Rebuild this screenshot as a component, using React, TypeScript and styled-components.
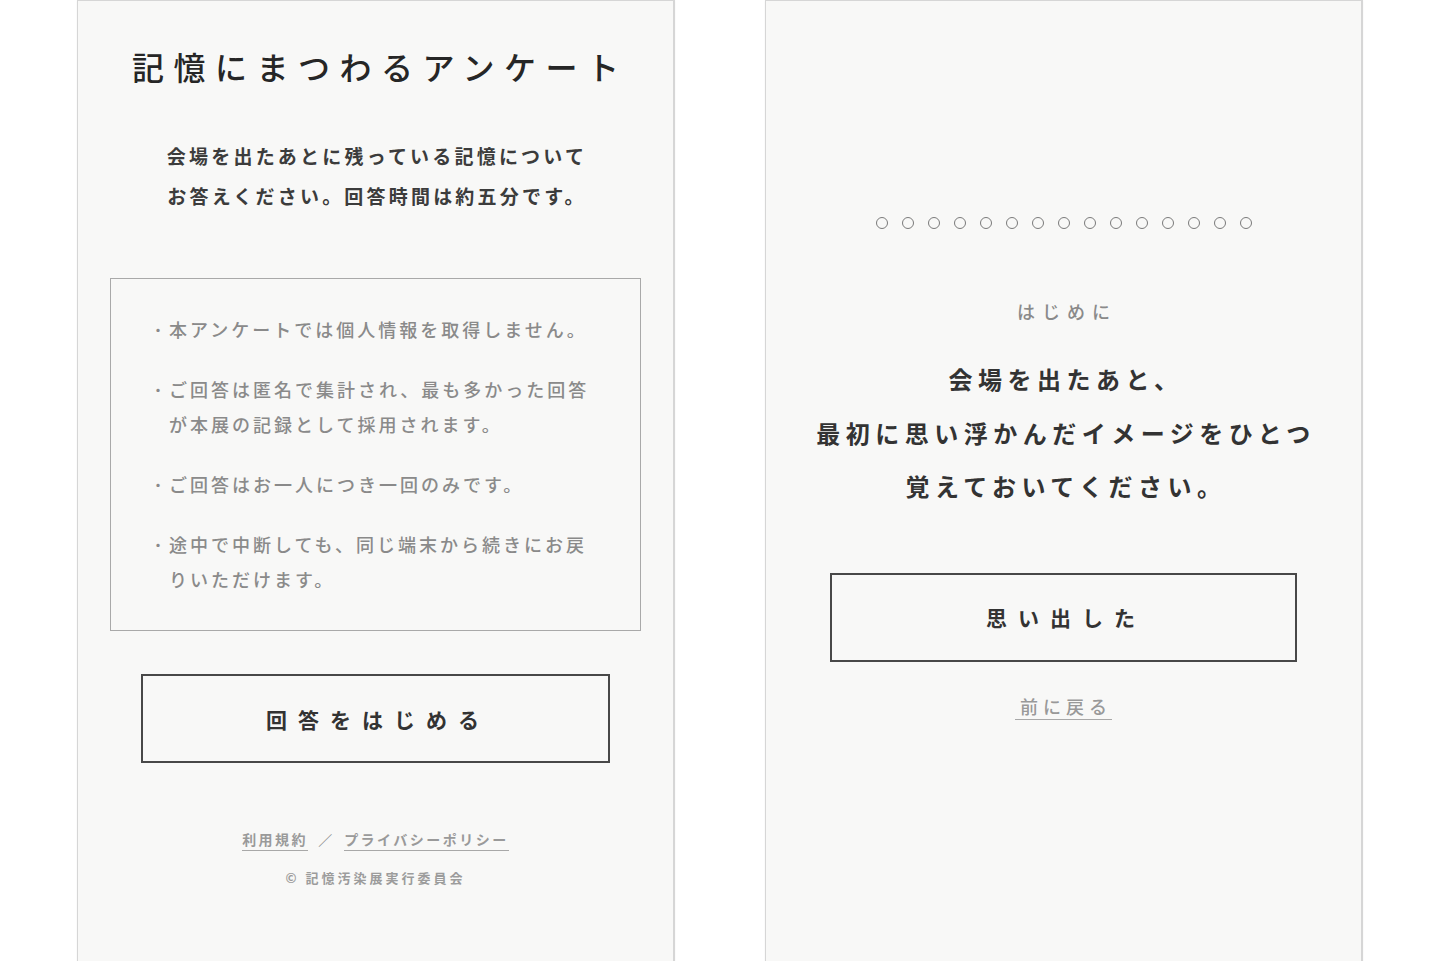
import styled, { createGlobalStyle } from "styled-components";

const GlobalStyle = createGlobalStyle`
  html, body {
    margin: 0;
    padding: 0;
    background: #ffffff;
    overflow: hidden;
  }
  body {
    font-family: "Noto Sans CJK JP", "Noto Sans", sans-serif;
    color: #333;
  }
`;

const notes = [
  ["本アンケートでは個人情報を取得しません。"],
  ["ご回答は匿名で集計され、最も多かった回答", "が本展の記録として採用されます。"],
  ["ご回答はお一人につき一回のみです。"],
  ["途中で中断しても、同じ端末から続きにお戻", "りいただけます。"]
];

const TOTAL_STEPS = 15;

export default function App() {
  return (
    <>
      <GlobalStyle />
      <Page>
        <Panel>
          <Title>記憶にまつわるアンケート</Title>
          <Lead>
            会場を出たあとに残っている記憶について
            <br />
            お答えください。回答時間は約五分です。
          </Lead>
          <NoteBox>
            {notes.map((lines, i) => (
              <NoteItem key={i}>
                <Bullet>・</Bullet>
                <NoteText>
                  {lines.map((l, j) => (
                    <span key={j}>
                      {l}
                      {j < lines.length - 1 && <br />}
                    </span>
                  ))}
                </NoteText>
              </NoteItem>
            ))}
          </NoteBox>
          <OutlineButton $top={43}>回答をはじめる</OutlineButton>
          <FooterLinks>
            <FooterLink>利用規約</FooterLink>
            <Slash>／</Slash>
            <FooterLink>プライバシーポリシー</FooterLink>
          </FooterLinks>
          <Copyright>© 記憶汚染展実行委員会</Copyright>
        </Panel>

        <Panel $pad={216}>
          <Steps>
            {Array.from({ length: TOTAL_STEPS }).map((_, i) => (
              <StepDot key={i} />
            ))}
          </Steps>
          <SectionLabel>はじめに</SectionLabel>
          <Prompt>
            会場を出たあと、
            <br />
            最初に思い浮かんだイメージをひとつ
            <br />
            覚えておいてください。
          </Prompt>
          <OutlineButton $top={60} $width={467}>
            思い出した
          </OutlineButton>
          <BackLink>前に戻る</BackLink>
        </Panel>
      </Page>
    </>
  );
}

const Page = styled.main`
  display: flex;
  justify-content: center;
  align-items: flex-start;
  gap: 90px;
  height: 961px;
  overflow: hidden;
`;

const Panel = styled.section<{ $pad?: number }>`
  box-sizing: border-box;
  width: 598px;
  height: 990px;
  padding-top: ${(p) => p.$pad ?? 45}px;
  display: flex;
  flex-direction: column;
  align-items: center;
  background: #f8f8f7;
  border: 1px solid #d6d6d6;
  border-right-width: 2px;
  box-shadow: 0 0 2px rgba(0, 0, 0, 0.05);
`;

const Title = styled.h1`
  margin: 0;
  font-size: 32px;
  line-height: 40px;
  font-weight: 500;
  letter-spacing: 9.5px;
  padding-left: 9.5px;
  color: #262626;
`;

const Lead = styled.p`
  margin: 50px 0 0;
  font-size: 19px;
  line-height: 40px;
  font-weight: 700;
  letter-spacing: 3.2px;
  padding-left: 3px;
  text-align: center;
  color: #3c3c3c;
`;

const NoteBox = styled.ul`
  box-sizing: border-box;
  width: 531px;
  margin: 62px 0 0;
  padding: 33px 20px 33px 42px;
  list-style: none;
  border: 1.5px solid #a9a9a9;
  display: flex;
  flex-direction: column;
  gap: 25px;
`;

const NoteItem = styled.li`
  display: flex;
  align-items: flex-start;
  font-size: 18px;
  line-height: 35px;
  color: #8a8a8a;
  font-weight: 500;
`;

const Bullet = styled.span`
  flex: 0 0 18px;
  width: 18px;
  margin-left: -2px;
  text-align: left;
  font-size: 14px;
`;

const NoteText = styled.span`
  letter-spacing: 3px;
`;

const OutlineButton = styled.button<{ $top: number; $width?: number }>`
  box-sizing: border-box;
  width: ${(p) => p.$width ?? 469}px;
  height: 89px;
  margin-top: ${(p) => p.$top}px;
  background: transparent;
  border: 2px solid #484848;
  font-family: "Noto Sans CJK JP", "Noto Sans", sans-serif;
  font-size: 21px;
  font-weight: 700;
  letter-spacing: 11px;
  padding-left: 11px;
  color: #333;
  cursor: pointer;
`;

const FooterLinks = styled.nav`
  margin-top: 64px;
  display: flex;
  align-items: center;
  font-size: 14px;
  line-height: 24px;
  color: #9a9a9a;
  font-weight: 700;
`;

const FooterLink = styled.a`
  letter-spacing: 2.5px;
  line-height: 16px;
  padding-bottom: 3px;
  border-bottom: 1.5px solid #a8a8a8;
  margin-top: 4px;
`;

const Slash = styled.span`
  margin: 0 12px 0 10px;
  font-weight: 400;
  color: #888;
`;

const Copyright = styled.small`
  margin-top: 17px;
  font-size: 13px;
  line-height: 20px;
  letter-spacing: 3px;
  font-weight: 700;
  color: #9c9c9c;
`;

const Steps = styled.div`
  display: flex;
  gap: 14px;
`;

const StepDot = styled.span`
  box-sizing: border-box;
  width: 12px;
  height: 12px;
  border-radius: 50%;
  border: 1.8px solid #7a7a7a;
`;

const SectionLabel = styled.h2`
  margin: 70px 0 0;
  font-size: 18px;
  line-height: 24px;
  font-weight: 500;
  letter-spacing: 7px;
  padding-left: 7px;
  color: #8a8a8a;
`;

const Prompt = styled.p`
  margin: 29px 0 0;
  font-size: 24px;
  line-height: 53.5px;
  font-weight: 700;
  letter-spacing: 5.5px;
  padding-left: 5px;
  text-align: center;
  color: #333;
`;

const BackLink = styled.a`
  margin-top: 34px;
  font-size: 18px;
  line-height: 20px;
  letter-spacing: 5px;
  padding: 0 0 3px 5px;
  border-bottom: 1.5px solid #a8a8a8;
  color: #999;
  font-weight: 500;
`;
